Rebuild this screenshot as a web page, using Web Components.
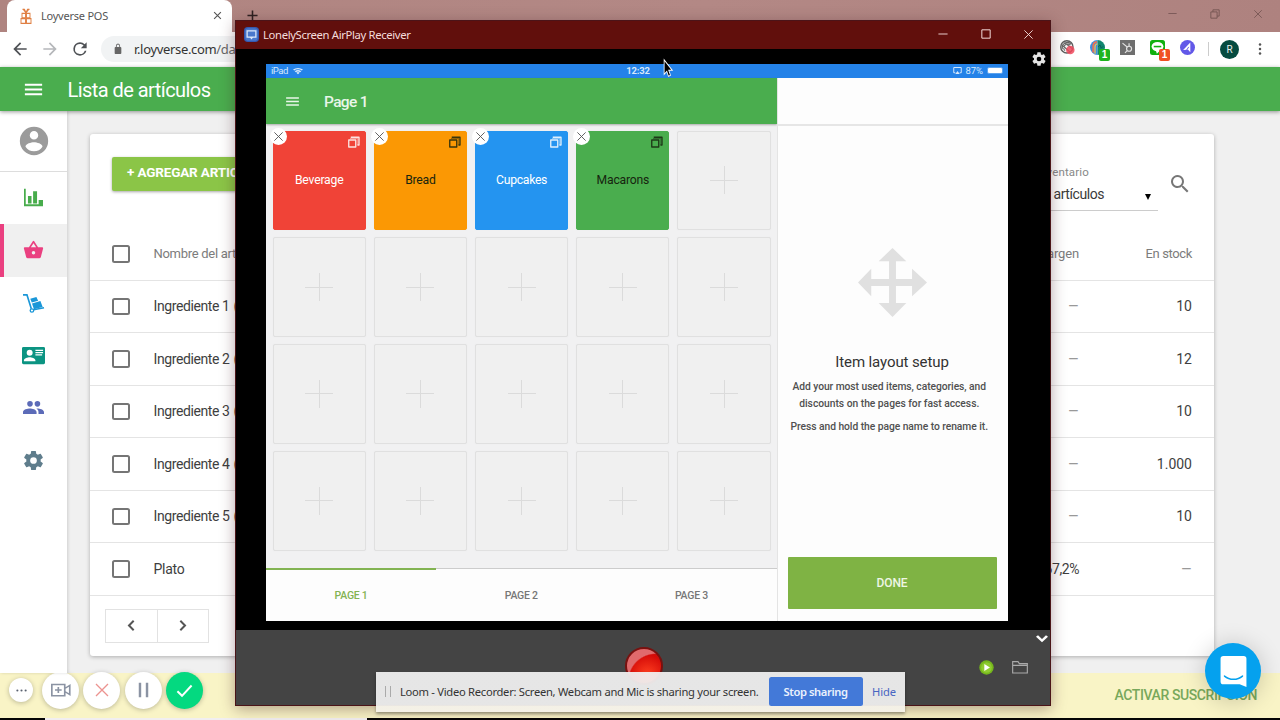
<!DOCTYPE html>
<html lang="es">
<head>
<meta charset="utf-8">
<title>Loyverse POS</title>
<style>
html,body{margin:0;width:1280px;height:720px;overflow:hidden;background:#fff;font-family:Roboto,"Liberation Sans",sans-serif}
</style>
</head>
<body>
<desk-top></desk-top>
<script>
const define=(name,css,html,after)=>{
  customElements.define(name,class extends HTMLElement{
    constructor(){super();this.attachShadow({mode:'open'});}
    connectedCallback(){
      if(this.ready)return;this.ready=true;
      const body=typeof html==='function'?html(this):html;
      this.shadowRoot.innerHTML=`<style>*{box-sizing:border-box}:host{display:block;box-sizing:border-box}${css}</style>${body}`;
      if(after)after(this);
    }
  });
};
const A=(el,n,d='')=>el.getAttribute(n)??d;

/* Single-line text; tracking is tuned so the line takes the width in "w". */
define('ui-text',':host{display:inline-block;white-space:nowrap;flex:none}','<slot></slot>',el=>{
  const w=parseFloat(A(el,'w'));
  if(w)queueMicrotask(()=>{
    const n=el.textContent.length;
    el.style.letterSpacing=((w-el.getBoundingClientRect().width)/n)+'px';
  });
});

const ICONS={
menu:'<path fill="currentColor" d="M3 18h18v-2H3v2zm0-5h18v-2H3v2zm0-7v2h18V6H3z"/>',
back:'<path fill="currentColor" d="M20 11H7.83l5.59-5.59L12 4l-8 8 8 8 1.41-1.41L7.83 13H20v-2z"/>',
fwd:'<path fill="currentColor" d="M12 4l-1.41 1.41L16.17 11H4v2h12.17l-5.58 5.59L12 20l8-8z"/>',
reload:'<path fill="currentColor" d="M17.65 6.35A7.96 7.96 0 0 0 12 4a8 8 0 1 0 7.73 10h-2.08A6 6 0 1 1 12 6c1.66 0 3.14.69 4.22 1.78L13 11h7V4l-2.35 2.35z"/>',
lock:'<path fill="currentColor" d="M18 8h-1V6A5 5 0 0 0 7 6v2H6a2 2 0 0 0-2 2v10c0 1.1.9 2 2 2h12a2 2 0 0 0 2-2V10a2 2 0 0 0-2-2zM9 6a3 3 0 0 1 6 0v2H9V6z"/>',
close:'<path fill="none" stroke="currentColor" stroke-width="3" d="M3 3l18 18M21 3L3 21"/>',
thinclose:'<path fill="none" stroke="currentColor" stroke-width="2" d="M3 3l18 18M21 3L3 21"/>',
plus:'<path fill="none" stroke="currentColor" stroke-width="3.4" d="M12 1v22M1 12h22"/>',
min:'<path stroke="currentColor" stroke-width="2.2" d="M1 12h22"/>',
max:'<path fill="none" stroke="currentColor" stroke-width="2.4" d="M2 2h20v20H2z"/>',
restore:'<path fill="none" stroke="currentColor" stroke-width="2.2" d="M2 7h15v15H2zM7 7V2h15v15h-5"/>',
user:'<path fill="currentColor" d="M12 2a10 10 0 1 0 0 20 10 10 0 0 0 0-20zm0 3a3 3 0 1 1 0 6 3 3 0 0 1 0-6zm0 14.2a7.2 7.2 0 0 1-6-3.22c.03-1.99 4-3.08 6-3.08s5.97 1.09 6 3.08a7.2 7.2 0 0 1-6 3.22z"/>',
chart:'<path fill="currentColor" d="M0 1h2.200v18.500H24V22H0zM5 9.500h4.500v9H5zM11.500 4h5v14.500h-5zM18.500 14.500H24v5h-5.500z"/>',
basket:'<path fill="currentColor" d="M17.21 9l-4.38-6.56a1 1 0 0 0-1.66 0L6.79 9H2a1 1 0 0 0-.96 1.27l2.54 9.27A2 2 0 0 0 5.500 21h13a2 2 0 0 0 1.930-1.460l2.540-9.270L23 10a1 1 0 0 0-1-1h-4.790zM9 9l3-4.400L15 9H9zm3 8a2 2 0 1 1 0-4 2 2 0 0 1 0 4z"/>',
dolly:'<path fill="none" stroke="currentColor" stroke-width="1.900" d="M0 2.200h4.500L9.500 19M12 20L24 17.800"/><circle cx="10.200" cy="21" r="2" fill="none" stroke="currentColor" stroke-width="1.500"/><path fill="currentColor" d="M8.300 7l7-2.300 2 4.500-7.300 2.100zM10.300 12.700l9.600-3 2.600 7.200-10 2.600z"/>',
idcard:'<path fill="currentColor" fill-rule="evenodd" d="M1.500 3h21A1.500 1.500 0 0 1 24 4.500v15a1.500 1.500 0 0 1-1.500 1.500h-21A1.500 1.500 0 0 1 0 19.500v-15A1.500 1.500 0 0 1 1.500 3zM8 6a3 3 0 1 0 0 6.200A3 3 0 0 0 8 6zM2 18h12v-1c0-2-4-3.200-6-3.200S2 15 2 17zM14 6v1.300h8V6zm0 2.400v1.300h8V8.400zm0 2.400v1.300h7v-1.300z"/>',
people:'<path fill="currentColor" d="M16.500 11a3.200 3.200 0 1 0 0-6.400 3.200 3.200 0 0 0 0 6.400zM8 11a3.200 3.200 0 1 0 0-6.400A3.200 3.200 0 0 0 8 11zm0 2c-2.700 0-8 1.300-8 4v2.500h15.500V17c0-2.700-5.200-4-7.500-4zm8.500 0l-1.200.1c1.400.9 2.400 2.200 2.400 3.900v2.500H24V17c0-2.700-5.200-4-7.500-4z"/>',
gear:'<path fill="currentColor" d="M19.430 12.980c.04-.32.07-.64.07-.98s-.03-.66-.07-.98l2.110-1.650a.5.5 0 0 0 .12-.64l-2-3.460a.5.5 0 0 0-.61-.22l-2.490 1a7.300 7.300 0 0 0-1.690-.98l-.38-2.650A.49.49 0 0 0 14 2h-4a.49.49 0 0 0-.49.42l-.38 2.650c-.61.25-1.170.59-1.690.98l-2.490-1a.5.5 0 0 0-.61.22l-2 3.460a.5.5 0 0 0 .12.64l2.110 1.650c-.04.32-.07.65-.07.98s.03.66.07.98l-2.110 1.650a.5.5 0 0 0-.12.64l2 3.460c.12.22.39.3.61.22l2.490-1c.52.4 1.080.73 1.690.98l.38 2.650c.03.24.24.42.49.42h4c.25 0 .46-.18.49-.42l.38-2.650c.61-.25 1.170-.59 1.690-.98l2.490 1c.23.09.49 0 .61-.22l2-3.460a.5.5 0 0 0-.12-.64l-2.110-1.650zM12 15.500a3.500 3.500 0 1 1 0-7 3.500 3.500 0 0 1 0 7z"/>',
search:'<path fill="currentColor" d="M15.500 14h-.79l-.28-.27A6.500 6.500 0 1 0 13.730 14.430l.27.28v.79l5 4.990L20.490 19l-4.990-5zm-6 0a4.500 4.500 0 1 1 0-9 4.500 4.500 0 0 1 0 9z"/>',
left:'<path fill="none" stroke="currentColor" stroke-width="3.200" d="M15.500 4.500L8 12l7.500 7.500"/>',
right:'<path fill="none" stroke="currentColor" stroke-width="3.200" d="M8.500 4.500L16 12l-7.500 7.500"/>',
down:'<path fill="none" stroke="currentColor" stroke-width="5.500" d="M2 5l10 11L22 5"/>',
copy:'<path fill="none" stroke="currentColor" stroke-width="2.700" stroke-linejoin="round" d="M1.500 8h14v14H1.500zM5.500 2.500h16.500V18h-3"/><path fill="none" stroke="currentColor" stroke-width="1" d="M4 5h15.500v13.500"/>',
wifi:'<path fill="none" stroke="currentColor" stroke-width="4" d="M1.500 9a15 15 0 0 1 21 0M5.500 14.500a9.500 9.500 0 0 1 13 0"/><path fill="currentColor" d="M12 22l-4-5a6 6 0 0 1 8 0z"/>',
airplay:'<path fill="none" stroke="currentColor" stroke-width="2.600" d="M6 18H2V4h20v14h-4"/><path fill="currentColor" d="M12 13l6 8H6z"/>',
move:'<path fill="currentColor" d="M12 0l4.800 4.600h-3.600v6.200h5.600V7.200L24 12l-5.200 4.800v-3.600h-5.600v5.900h3.600L12 24l-4.800-4.900h3.600v-5.900H4.600v3.600L0 12l4.600-4.800v3.600h6.200V4.600H7.200z"/>',
folder:'<path fill="none" stroke="currentColor" stroke-width="1.700" d="M1 21V4h8l2 3h12v14zM1 9.500h22"/>',
dots:'<g fill="currentColor"><circle cx="12" cy="3" r="2.500"/><circle cx="12" cy="12" r="2.500"/><circle cx="12" cy="21" r="2.500"/></g>',
hdots:'<g fill="currentColor"><circle cx="3" cy="12" r="2.300"/><circle cx="12" cy="12" r="2.300"/><circle cx="21" cy="12" r="2.300"/></g>',
cam:'<path fill="none" stroke="currentColor" stroke-width="2" d="M1 4.500h15.500v15H1zM16.500 10l6-4v12l-6-4M8.800 8v8M4.800 12h8"/>',
pause:'<path stroke="currentColor" stroke-width="4.500" d="M5.500 1v22M18.500 1v22"/>',
check:'<path fill="none" stroke="currentColor" stroke-width="2.800" d="M2 13l6.500 6.500L22 5"/>',
shop:'<g fill="none" stroke="currentColor" stroke-width="1.900"><path d="M4 8h7v7H4zM13 8h7v7h-7zM2 16h9v7H2zM13 16h9v7h-9zM12 7L6 1.500M12 7l6-5.500M5 2h4l3 5 3-5h4"/></g>',
monitor:'<rect width="24" height="24" rx="6" fill="#3559b0"/><rect x="2" y="2" width="20" height="20" rx="5" fill="#4a78cc"/><path fill="none" stroke="#dce8fa" stroke-width="2" d="M5 6h14v10H5z"/><path fill="#dce8fa" d="M9 16h6l-3 4z"/>',
x1:'<circle cx="11" cy="11" r="9.800" fill="#f4f4f4" stroke="#5d5d5d" stroke-width="2.200"/><path fill="none" stroke="#666" stroke-width="1.800" d="M4 14a8 8 0 0 1 14-7M8 17a6 6 0 0 1 8-9M3 8l14 12M7 4l14 11"/><circle cx="16.500" cy="16" r="6.800" fill="#f0485c" opacity=".85"/>',
x2:'<path d="M12 0a12 12 0 0 0 0 24z" fill="#3b8ee0"/><path d="M12 0a12 12 0 0 1 0 24z" fill="#11866f"/><path fill="none" stroke="#f0714f" stroke-width="2.500" d="M5 20V10a7 7 0 0 1 6-7"/><path fill="none" stroke="#f5c24c" stroke-width="2" d="M8 22V11a5 5 0 0 1 4-5"/><path fill="none" stroke="#0c5f53" stroke-width="1.500" d="M13 11l3-3 2 5 3-3"/>',
x3:'<path fill="#6e6e6e" d="M0 0h24v24H0z"/><g fill="none" stroke="#e2e2e2" stroke-width="1.900"><circle cx="14.500" cy="14" r="4"/><path d="M14.500 10V5M4 5l8 6.500M11.500 17L8 20.500"/></g>',
x4:'<rect width="24" height="24" rx="4" fill="#10b010"/><ellipse cx="12" cy="10.500" rx="9.500" ry="7.500" fill="#fff"/><path fill="#fff" d="M9 16h8l-6 6z"/><path stroke="#10b010" stroke-width="2.500" d="M6 10.500h12"/>',
x5:'<circle cx="12" cy="12" r="12" fill="#6258e8"/><path fill="#fff" d="M16.500 4v15.500l-3.500-4L5 16z"/><path d="M10 17l4-6" stroke="#6258e8" stroke-width="1.500"/>',
cursor:'<path fill="#000" stroke="#fff" stroke-width="1.300" d="M5 1v18.500l4.300-4L12 22l3.200-1.400-2.800-6.300H18z"/>',
play:'<circle cx="12" cy="12" r="11.500" fill="#76b81c"/><circle cx="12" cy="12" r="8.500" fill="#8fcb30"/><path fill="#fff" d="M8.500 6.500l9 5.500-9 5.500z"/>',
chat:'<path fill="#fff" d="M3 0h18A2.500 2.500 0 0 1 23.500 2.500V27l-6-2.300H3a2.500 2.500 0 0 1-2.500-2.500V2.500A2.500 2.500 0 0 1 3 0z"/><path fill="none" stroke="#05a1ee" stroke-width="1.300" stroke-linecap="round" d="M4 17.500c4.500 3.800 11.500 3.800 16 0"/>'
};
define('ui-icon',':host{display:inline-block;flex:none}svg{display:block;overflow:visible}',el=>{
  const s=A(el,'size','16'),h=A(el,'h',s);
  return `<svg width="${s}" height="${h}" viewBox="${A(el,'box','0 0 24 24')}" preserveAspectRatio="none">${ICONS[A(el,'name')]}</svg>`;
});

define('browser-tabs',`:host{height:32px;background:linear-gradient(100deg,#af8480,#b38885 55%,#ae827f);display:flex;justify-content:space-between;padding-left:7px}
.tab{width:225px;height:32px;background:#fff;border-radius:8px 8px 0 0;display:flex;align-items:center;padding:0 10px 1px 13px;font:11px "Noto Sans","Open Sans",sans-serif;color:#555}
.shop{color:#e07f43;margin-right:9px}.x{color:#555;margin-left:auto}
.new{color:#2d2020;margin:10px auto 0 15px}.win{display:flex;gap:33px;align-items:center;padding:0 17px 5px 0;color:#735351}`,
`<div class="tab"><ui-icon class="shop" name="shop" size="12" h="16"></ui-icon><ui-text w="67">Loyverse POS</ui-text><ui-icon class="x" name="close" size="9"></ui-icon></div>
<ui-icon class="new" name="plus" size="11"></ui-icon>
<div class="win"><ui-icon name="min" size="9"></ui-icon><ui-icon name="restore" size="10"></ui-icon><ui-icon name="thinclose" size="10"></ui-icon></div>`);

define('ext-badge',':host{position:absolute;left:9px;top:9px;width:11px;height:11.500px;border-radius:2px;font:bold 10px/11.500px "Liberation Sans",sans-serif;color:#fff;text-align:center}','<slot></slot>');

define('browser-toolbar',`:host{height:35px;background:#fff;display:flex;align-items:center;padding:0 14px 1px 10px}
.nav{display:flex;color:#4f5256;gap:10px;align-items:center}.nav .f{color:#b5b7ba}
.url{margin-left:11px;width:900px;height:26px;border-radius:13px;background:#f1f3f4;display:flex;align-items:center;gap:11px;padding-left:12px;color:#666;font:13px "Noto Sans","Open Sans",sans-serif}
.url b{font-weight:400;color:#333}
.ext{display:flex;align-items:center;gap:15px;margin-left:auto}.e{position:relative;top:.5px}
.sep{width:1px;height:14px;background:#ccc;margin:0 -6px 0 -2px}
.r{width:19px;height:19px;border-radius:50%;background:#064b40;color:#e8efee;font:10px/19px Roboto;text-align:center;margin-right:-2px;margin-left:2px}
.d{color:#555;margin-left:2px}`,
`<div class="nav"><ui-icon name="back" size="20"></ui-icon><ui-icon class="f" name="fwd" size="20"></ui-icon><ui-icon name="reload" size="20"></ui-icon></div>
<div class="url"><ui-icon name="lock" size="10" h="12"></ui-icon><ui-text w="101.500"><b>r.loyverse.com</b>/da</ui-text></div>
<div class="ext"><div class="e"><ui-icon name="x1" size="15"></ui-icon></div>
<div class="e"><ui-icon name="x2" size="15"></ui-icon><ext-badge style="background:#1eb41e">1</ext-badge></div>
<div class="e"><ui-icon name="x3" size="15"></ui-icon></div>
<div class="e"><ui-icon name="x4" size="15"></ui-icon><ext-badge style="background:#f05023">1</ext-badge></div>
<div class="e"><ui-icon name="x5" size="15"></ui-icon></div>
<div class="sep"></div><div class="r">R</div><ui-icon class="d" name="dots" size="12"></ui-icon></div>`);

define('app-bar',`:host{height:44px;background:#4aad4e;color:#fff;display:flex;align-items:center;padding:1px 0 0 22px;gap:22.500px;font-size:20px;position:relative;z-index:2;box-shadow:0 1px 4px rgba(0,0,0,.4)}`,
`<ui-icon name="menu" size="23"></ui-icon><ui-text w="143">Lista de artículos</ui-text>`);

define('nav-item',`:host{height:52.500px;display:flex;align-items:center;justify-content:center;border-left:4px solid transparent;padding-right:4px}
:host([active]){border-color:#ea4080;background:#f0f0f0}`,el=>`<ui-icon name="${A(el,'icon')}" size="${A(el,'size','22')}" h="${A(el,'h',A(el,'size','22'))}"></ui-icon>`);

define('side-nav',`:host{width:67px;background:#fff;box-shadow:1px 0 3px rgba(0,0,0,.14);z-index:1}
.u{height:60.500px;display:flex;align-items:center;justify-content:center;border-bottom:1px solid #ddd;color:#9b9b9b}`,
`<div class="u"><ui-icon name="user" size="34"></ui-icon></div>
<nav-item icon="chart" size="19" h="20" style="color:#48ac4c"></nav-item>
<nav-item icon="basket" size="21" h="22" active style="color:#ea4080"></nav-item>
<nav-item icon="dolly" size="21" h="20" style="color:#1a97d8"></nav-item>
<nav-item icon="idcard" size="23" style="color:#0b9482"></nav-item>
<nav-item icon="people" size="21" style="color:#5c6bb8"></nav-item>
<nav-item icon="gear" size="23" style="color:#5f7d8c"></nav-item>`);

define('check-box',':host{width:17.500px;height:17.500px;border:2px solid #757575;border-radius:2.500px;flex:none}','');

define('item-row',`:host{height:52.500px;display:flex;align-items:center;border-bottom:1px solid #e4e4e4;padding:0 22px 0 22px;font-size:14px;color:#3e3e3e}
:host([head]){font-size:13px;color:#7c7c7c}
.n{margin-left:24px;display:flex;gap:4px}.m{margin-left:auto}.s{width:113px;display:flex;justify-content:flex-end}.g{color:#999;transform:scaleX(1.25);transform-origin:100% 50%}`,
el=>{const d=t=>t==='–'?'g':'';return `<check-box></check-box><div class="n"><ui-text w="${A(el,'nw')}">${A(el,'name')}</ui-text>${el.hasAttribute('more')?'<span>(</span>':''}</div>
<ui-text class="m ${d(A(el,'margin'))}" w="${A(el,'mw')}">${A(el,'margin')}</ui-text><div class="s"><ui-text class="${d(A(el,'stock'))}" w="${A(el,'sw')}">${A(el,'stock')}</ui-text></div>`});

define('items-card',`:host{width:1124px;height:522px;background:#fff;border-radius:3px;box-shadow:0 1px 4px rgba(0,0,0,.28)}
.top{height:94px;display:flex;padding:22.500px 22px 0}
.btn{width:170px;height:34px;background:#8bc547;color:#fff;border-radius:2px;font-weight:700;font-size:13.500px;display:flex;align-items:center;padding:0 0 3px 15px;box-shadow:0 1px 3px rgba(0,0,0,.35)}
.f{margin-left:auto;width:110px;height:54px;border-bottom:1px solid #ccc;padding:8px 0 0 6px;font-size:14px;color:#3a3a3a;display:flex;flex-direction:column;gap:6px}
.l{font-size:11.500px;color:#888;line-height:15px;margin-left:-7px;align-self:flex-start}.v{display:flex;line-height:16px;padding-right:7px;justify-content:space-between;align-items:center}
.c{border:3.500px solid transparent;border-top:6px solid #000;border-bottom:0;margin-top:7px}
.s{color:#777;margin:15px 0 0 10.500px}
.p{display:flex;margin:13px 0 0 15px;width:104px;height:34px;border:1px solid #e2e2e2;color:#555}.p div{flex:1;display:flex;align-items:center;justify-content:center}.p div+div{border-left:1px solid #e2e2e2}`,
`<div class="top"><div class="btn"><ui-text w="111.500">+ AGREGAR ARTIC</ui-text></div>
<div class="f"><ui-text class="l" w="42.500">ventario</ui-text><div class="v"><ui-text w="50.5">artículos</ui-text><span class="c"></span></div></div><ui-icon class="s" name="search" size="24"></ui-icon></div>
<item-row head name="Nombre del art" nw="82.500" margin="argen" mw="32" stock="En stock" sw="46.5"></item-row>
${[[1,10],[2,12],[3,10],[4,'1.000'],[5,10]].map(([i,s])=>`<item-row name="Ingrediente ${i}" more nw="76" margin="–" stock="${s}"></item-row>`).join('')}
<item-row name="Plato" nw="31" margin="67,2%" mw="34.500" stock="–"></item-row>
<div class="p"><div><ui-icon name="left" size="15"></ui-icon></div><div><ui-icon name="right" size="15"></ui-icon></div></div>`);

define('loom-button',`:host{width:37px;height:37px;border-radius:50%;background:#fff;display:flex;align-items:center;justify-content:center;box-shadow:0 1px 5px rgba(0,0,0,.25)}`,'<slot></slot>');
define('loom-controls',`:host{position:absolute;left:9px;top:671.500px;display:flex;align-items:center;gap:4.200px;color:#8b93a3}.s{width:24px;height:24px;margin-right:5px}`,
`<loom-button class="s" style="color:#5a6270"><ui-icon name="hdots" size="11"></ui-icon></loom-button>
<loom-button><ui-icon name="cam" size="20" h="18"></ui-icon></loom-button>
<loom-button style="color:#ec9390"><ui-icon name="thinclose" size="16"></ui-icon></loom-button>
<loom-button><ui-icon name="pause" size="13" h="16"></ui-icon></loom-button>
<loom-button style="color:#fff;background:#04d980"><ui-icon name="check" size="17"></ui-icon></loom-button>`);

define('promo-bar',`:host{height:45.500px;background:#f9f4c6;display:flex;align-items:center;justify-content:flex-end;padding-right:23px;color:#78a85b;font-weight:500;font-size:14px}`,'<ui-text w="142.5">ACTIVAR SUSCRIPCIÓN</ui-text>');
define('task-strip',':host{height:2px;display:flex;background:#050505}div{width:322px;margin-left:45px;background:#f1eef0}','<div></div>');

define('browser-window',`:host{width:1280px;height:720px;display:flex;flex-direction:column;background:#f0f0f0}
.b{height:561.500px;display:flex;flex:none}.m{flex:1;padding:23px 0 0 23px}`,
`<browser-tabs></browser-tabs><browser-toolbar></browser-toolbar><app-bar></app-bar>
<div class="b"><side-nav></side-nav><div class="m"><items-card></items-card></div></div><promo-bar></promo-bar><task-strip></task-strip>`);

define('grid-tile',`:host{position:relative;display:flex;align-items:center;justify-content:center;border:1px solid #e0e0e0;border-radius:2px;color:#fff;font-size:12.200px;background:#f0f0f0;box-shadow:0 0 1px #e6e6e6}
:host([label]){background:var(--c);border-color:var(--c);padding-bottom:1px}:host([dark]){color:#17250f}
.x{position:absolute;left:-4px;top:-4px;width:17px;height:17px;border-radius:50%;background:#fff;color:#555;display:flex;align-items:center;justify-content:center}
.c{position:absolute;right:5px;top:4.500px;opacity:.85}.p{width:28px;height:28px;background:linear-gradient(#dbdbdb,#dbdbdb) center/1px 28px no-repeat,linear-gradient(#dbdbdb,#dbdbdb) center/28px 1px no-repeat}`,
el=>el.hasAttribute('label')?`<span class="x"><ui-icon name="thinclose" size="11"></ui-icon></span><ui-icon class="c" name="copy" size="12"></ui-icon><ui-text w="${A(el,'w')}">${A(el,'label')}</ui-text>`:'<div class="p"></div>');

define('ipad-status',`:host{height:14px;background:#2482e8;color:#d7e8fb;display:grid;grid-template-columns:1fr auto 1fr;align-items:center;padding:0 3px 1px 5px;font:9.500px/13px Roboto,sans-serif}
div{display:flex;align-items:center;gap:5px}.r{justify-content:flex-end;gap:4px;margin-right:2px}.t{font-weight:700}
.b{width:16px;height:7px;border-radius:2px;border:1px solid #5ba2ee;background:#fff}`,
`<div><ui-text w="17">iPad</ui-text><ui-icon name="wifi" size="10" h="8"></ui-icon></div><ui-text class="t" w="23.500">12:32</ui-text><div class="r"><ui-icon name="airplay" size="9"></ui-icon><ui-text w="17.500">87%</ui-text><span class="b"></span></div>`);

define('page-editor',`:host{width:510.500px;display:flex;flex-direction:column;background:#f1f1f2;flex:none}
.h{height:46px;background:#4aad4e;color:#e9f6e9;display:flex;align-items:center;padding:1px 0 0 18px;gap:23px;font-size:15.500px;box-shadow:0 1px 2px rgba(0,0,0,.3);flex:none;font-weight:500}
.g{height:444px;flex:none;padding:6.600px 5.900px 17.500px 6.600px;display:grid;grid-template:repeat(4,1fr)/repeat(5,1fr);gap:7px 8px}
.t{flex:1;background:#fdfdfd;display:flex;border-top:1px solid #ccc;font-size:10.500px;color:#777;font-weight:500}
.t div{flex:1;display:flex;align-items:center;justify-content:center;border-top:2px solid transparent;padding-bottom:2px}.t .a{color:#82b352;border-color:#82b352;margin-top:-1px;padding-bottom:1px}`,
`<div class="h"><ui-icon name="menu" size="17"></ui-icon><ui-text w="44">Page 1</ui-text></div>
<div class="g"><grid-tile label="Beverage" w="48.500" style="--c:#f04337"></grid-tile><grid-tile label="Bread" w="30.500" dark style="--c:#fb9804"></grid-tile><grid-tile label="Cupcakes" w="51" style="--c:#2494f0"></grid-tile><grid-tile label="Macarons" w="52.500" dark style="--c:#4aad4e"></grid-tile>${'<grid-tile></grid-tile>'.repeat(16)}</div>
<div class="t"><div class="a"><ui-text w="33">PAGE 1</ui-text></div><div><ui-text w="33">PAGE 2</ui-text></div><div><ui-text w="33">PAGE 3</ui-text></div></div>`);

define('setup-panel',`:host{flex:1;background:#fdfdfd;display:flex;flex-direction:column;align-items:center;border-left:1px solid #e4e4e4;padding-right:1.500px;color:#505050;font-size:10.300px;font-weight:500;line-height:17.500px}
.h{align-self:stretch;height:47.500px;border-bottom:2px solid #e6e6e6;flex:none;margin-right:-1.500px}.m{color:#e0e0e0;margin-top:122px}
.t{font-size:15px;color:#333;line-height:20px;margin:35px 0 6px;font-weight:400}.p{margin-right:5.500px}.l{margin-top:5.500px}
.d{margin-top:auto;margin-bottom:12.500px;width:209px;height:51.500px;background:#7fb344;border-radius:1px;color:#eef6e4;font-size:12px;display:flex;align-items:center;justify-content:center;padding-top:2px}`,
`<div class="h"></div><ui-icon class="m" name="move" size="69"></ui-icon><ui-text class="t" w="113.500">Item layout setup</ui-text>
<ui-text class="p" w="193.500">Add your most used items, categories, and</ui-text><ui-text class="p" w="180">discounts on the pages for fast access.</ui-text><ui-text class="p l" w="197.500">Press and hold the page name to rename it.</ui-text>
<div class="d"><ui-text w="31">DONE</ui-text></div>`);

define('ipad-screen',':host{width:742px;height:557px;background:#fff;display:flex;flex-direction:column}.b{flex:1;display:flex}',
'<ipad-status></ipad-status><div class="b"><page-editor></page-editor><setup-panel></setup-panel></div>');

define('airplay-window',`:host{position:absolute;left:235px;top:20px;width:816px;height:686px;border:1px solid #4b1418;background:#000;box-shadow:0 3px 14px rgba(60,20,30,.38);display:flex;flex-direction:column;z-index:3}
.t{height:28px;background:#610f0c;display:flex;align-items:center;padding:0 16px 1px 8px;color:#f3dcdb;font:11.300px "Noto Sans","Open Sans",sans-serif;flex:none}
.t .n{margin-left:4px}.w{display:flex;gap:32.500px;margin-left:auto}
.s{height:581px;display:flex;flex:none;padding:15px 3px 0 30px;align-items:flex-start;justify-content:space-between}
.g{color:#e4e4e4;margin-top:-13px}
.f{flex:1;background:#444;display:grid;grid-template-columns:1fr 38px 1fr;align-items:start;padding:17px 0 0 1px}
.rec{width:38px;height:38px;border-radius:50%;border:2px solid #79110f;background:radial-gradient(circle at 85% 95%,transparent 62%,#e06a6c 65%),radial-gradient(circle at 60% 75%,#ff4020,#d50b08 60%)}
.r{display:grid;justify-content:end;grid-template:auto auto/auto auto;gap:15px 18px;color:#aaa;margin-top:-13px;align-items:center}
.c{grid-column:1/3;justify-self:end;color:#fff;margin-right:2px}.o{margin-right:22px}`,
`<div class="t"><ui-icon name="monitor" size="15"></ui-icon><ui-text class="n" w="147.500">LonelyScreen AirPlay Receiver</ui-text><div class="w"><ui-icon name="min" size="10"></ui-icon><ui-icon name="max" size="10"></ui-icon><ui-icon name="thinclose" size="11"></ui-icon></div></div>
<div class="s"><ipad-screen></ipad-screen><ui-icon class="g" name="gear" size="16"></ui-icon></div>
<div class="f"><span></span><div class="rec"></div><div class="r"><ui-icon class="c" name="down" size="12" h="10"></ui-icon><ui-icon name="play" size="15"></ui-icon><ui-icon class="o" name="folder" size="16"></ui-icon></div></div>`);

define('share-bar',`:host{position:absolute;z-index:4;left:376px;top:672px;width:529px;height:40px;background:linear-gradient(rgba(240,240,240,.94) 82%,rgba(245,242,232,.97) 86%);box-shadow:0 2px 3px rgba(0,0,0,.35);display:flex;align-items:center;padding:0 9px 1px 9px;font:11.200px "Noto Sans","Open Sans",sans-serif;color:#333}
.p{width:5.500px;height:11px;border:solid #aaa;border-width:0 1.500px}.m{margin-left:9.500px}
.b{margin:0 9.500px 0 auto;width:94px;height:29.500px;border-radius:2.500px;background:#4379d8;color:#eaf1fd;font-weight:600;display:flex;align-items:center;justify-content:center}.h{color:#4765c2}`,
`<span class="p"></span><ui-text class="m" w="358.500">Loom - Video Recorder: Screen, Webcam and Mic is sharing your screen.</ui-text><div class="b"><ui-text w="64">Stop sharing</ui-text></div><ui-text class="h" w="24">Hide</ui-text>`);

define('chat-launcher',`:host{position:absolute;left:1205px;top:643px;width:56px;height:56px;border-radius:50%;background:#05a1ee;box-shadow:0 2px 24px rgba(0,0,0,.2);display:flex;align-items:center;justify-content:center}`,
'<ui-icon name="chat" size="27" h="31" box="0 0 24 27"></ui-icon>');

define('desk-top',':host{position:relative;width:1280px;height:720px;overflow:hidden}.cur{position:absolute;left:661px;top:59px;z-index:5}',
'<browser-window></browser-window><loom-controls></loom-controls><chat-launcher></chat-launcher><airplay-window></airplay-window><share-bar></share-bar><ui-icon class="cur" name="cursor" size="15" h="19"></ui-icon>');
</script>
</body>
</html>
